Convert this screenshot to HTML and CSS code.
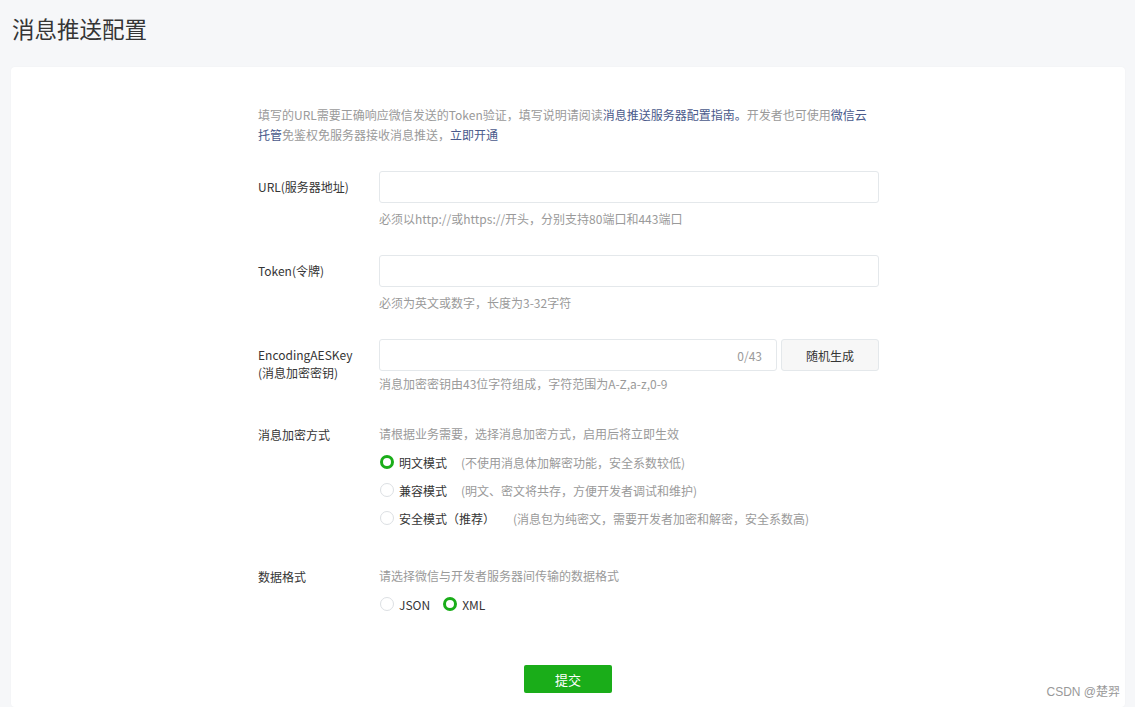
FILE: index.html
```html
<!DOCTYPE html>
<html lang="zh-CN">
<head>
<meta charset="utf-8">
<title>消息推送配置</title>
<link rel="stylesheet" href="styles.css">
</head>
<body>
<h1 class="page-title">消息推送配置</h1>
<div class="card">
  <div class="form">
    <p class="intro">填写的URL需要正确响应微信发送的Token验证，填写说明请阅读<a class="link">消息推送服务器配置指南。</a>开发者也可使用<a class="link">微信云托管</a>免鉴权免服务器接收消息推送，<a class="link">立即开通</a></p>

    <div class="row row-url">
      <div class="label">URL(服务器地址)</div>
      <div class="field">
        <div class="input"></div>
        <div class="hint">必须以http://或https://开头，分别支持80端口和443端口</div>
      </div>
    </div>

    <div class="row row-token">
      <div class="label">Token(令牌)</div>
      <div class="field">
        <div class="input"></div>
        <div class="hint">必须为英文或数字，长度为3-32字符</div>
      </div>
    </div>

    <div class="row row-aes">
      <div class="label label-two">EncodingAESKey<br>(消息加密密钥)</div>
      <div class="field">
        <div class="input-group">
          <div class="input input-counter"><span class="counter">0/43</span></div>
          <div class="btn-plain">随机生成</div>
        </div>
        <div class="hint hint-tight">消息加密密钥由43位字符组成，字符范围为A-Z,a-z,0-9</div>
      </div>
    </div>

    <div class="row row-mode">
      <div class="label label-text">消息加密方式</div>
      <div class="field">
        <div class="hint hint-top">请根据业务需要，选择消息加密方式，启用后将立即生效</div>
        <div class="radio-list">
          <div class="radio-item"><span class="radio checked"></span><span class="radio-label">明文模式</span><span class="radio-desc">(不使用消息体加解密功能，安全系数较低)</span></div>
          <div class="radio-item"><span class="radio"></span><span class="radio-label">兼容模式</span><span class="radio-desc">(明文、密文将共存，方便开发者调试和维护)</span></div>
          <div class="radio-item"><span class="radio"></span><span class="radio-label">安全模式（推荐）</span><span class="radio-desc desc-wide">(消息包为纯密文，需要开发者加密和解密，安全系数高)</span></div>
        </div>
      </div>
    </div>

    <div class="row row-format">
      <div class="label label-text">数据格式</div>
      <div class="field">
        <div class="hint hint-top">请选择微信与开发者服务器间传输的数据格式</div>
        <div class="radio-inline">
          <div class="radio-item"><span class="radio"></span><span class="radio-label">JSON</span></div>
          <div class="radio-item"><span class="radio checked"></span><span class="radio-label">XML</span></div>
        </div>
      </div>
    </div>

    <div class="actions">
      <button class="btn-primary">提交</button>
    </div>
  </div>
  <div class="watermark">CSDN @楚羿</div>
</div>
</body>
</html>
```

FILE: styles.css
```css
* { box-sizing: border-box; }
html, body { margin: 0; padding: 0; }
body {
  background: #f6f7f9;
  font-family: "Noto Sans CJK SC", "Noto Sans", sans-serif;
  color: #353535;
  font-size: 12px;
  overflow: hidden;
  height: 707px;
}
.page-title {
  margin: 0;
  padding: 12px 0 0 12px;
  height: 67px;
  font-size: 22.5px;
  line-height: 32px;
  font-weight: 400;
  color: #353535;
}
.card {
  position: relative;
  margin-left: 11px;
  width: 1114px;
  height: 640px;
  background: #fff;
  border-radius: 4px;
  box-shadow: 0 0 2px rgba(0,0,0,0.04);
}
.form {
  padding: 38px 0 0 247px;
  width: 880px;
}
.intro {
  margin: 0;
  width: 618px;
  font-size: 12px;
  line-height: 20px;
  color: #9a9a9a;
}
.link { color: #4a5a8b; text-decoration: none; }
.row {
  display: flex;
}
.row-url { margin-top: 26px; }
.row-token { margin-top: 26px; }
.row-aes { margin-top: 26px; }
.row-mode { margin-top: 30px; }
.row-format { margin-top: 38px; }
.label {
  width: 121px;
  flex: none;
  line-height: 32px;
  font-size: 12px;
  color: #353535;
}
.label-two {
  line-height: 18px;
  padding-top: 7px;
}
.label-text {
  line-height: 20px;
  padding-top: 1px;
}
.field { width: 500px; }
.input {
  height: 32px;
  border: 1px solid #e4e8eb;
  border-radius: 3px;
  background: #fff;
}
.input-group {
  display: flex;
  gap: 4px;
}
.input-counter {
  flex: 1;
  display: flex;
  align-items: center;
  justify-content: flex-end;
  padding-right: 14px;
}
.counter { color: #9a9a9a; font-size: 12px; }
.btn-plain {
  width: 98px;
  height: 32px;
  flex: none;
  border: 1px solid #e4e8eb;
  border-radius: 3px;
  background: #f7f7f7;
  display: flex;
  align-items: center;
  justify-content: center;
  font-size: 12px;
  color: #353535;
}
.hint {
  margin-top: 6px;
  line-height: 20px;
  font-size: 12px;
  color: #9a9a9a;
}
.hint-tight { margin-top: 3px; }
.hint-top { margin-top: 0; }
.radio-list {
  display: flex;
  flex-direction: column;
  gap: 8px;
  margin-top: 8px;
}
.radio-inline {
  display: flex;
  gap: 12px;
  margin-top: 8px;
}
.radio-item {
  display: flex;
  align-items: center;
  height: 20px;
  padding-left: 1px;
}
.radio {
  width: 14px;
  height: 14px;
  border-radius: 50%;
  border: 1px solid #dcdfe3;
  background: #fff;
  flex: none;
}
.radio.checked {
  border: 3.5px solid #1aad19;
}
.radio-label {
  margin-left: 5px;
  color: #353535;
  font-size: 12px;
}
.radio-desc {
  margin-left: 14px;
  color: #9a9a9a;
  font-size: 12px;
}
.desc-wide { margin-left: 18px; }
.actions {
  display: flex;
  justify-content: center;
  margin-top: 51px;
  width: 620px;
}
.btn-primary {
  width: 88px;
  height: 28px;
  border: none;
  border-radius: 2px;
  background: #1aad19;
  color: #fff;
  font-family: "Noto Sans CJK SC", "Noto Sans", sans-serif;
  font-size: 13px;
  padding: 0;
}
.watermark {
  position: absolute;
  right: 5px;
  top: 616px;
  white-space: nowrap;
  font-family: "Liberation Sans", "Noto Sans CJK SC", sans-serif;
  font-size: 12px;
  color: #999;
  line-height: 18px;
}
```
